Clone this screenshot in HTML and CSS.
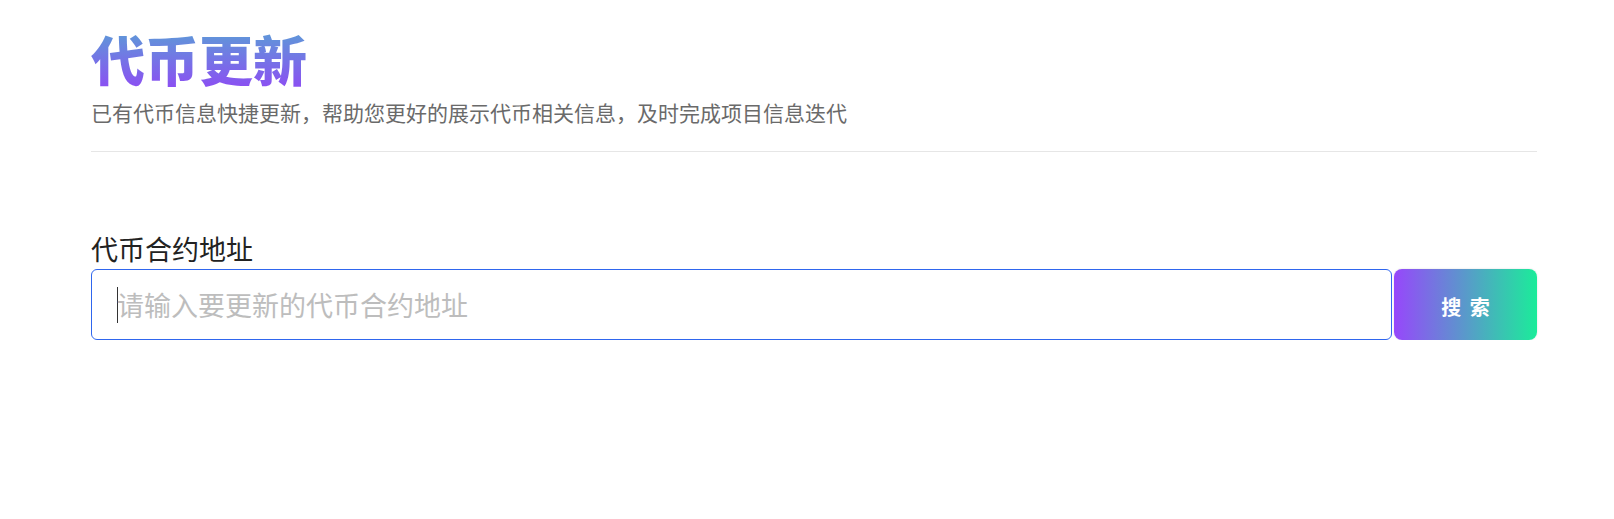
FILE: index.html
```html
<!DOCTYPE html>
<html lang="zh-CN">
<head>
<meta charset="utf-8">
<link rel="stylesheet" href="styles.css">
</head>
<body>
<div class="page">
  <header class="head">
    <h1 class="title">代币更新</h1>
    <p class="subtitle">已有代币信息快捷更新，帮助您更好的展示代币相关信息，及时完成项目信息迭代</p>
  </header>
  <section class="form">
    <label class="label">代币合约地址</label>
    <div class="row">
      <div class="input"><span class="caret"></span><span class="placeholder">请输入要更新的代币合约地址</span></div>
      <button class="btn">搜 索</button>
    </div>
  </section>
</div>
</body>
</html>
```

FILE: styles.css
```css
html, body {
  margin: 0;
  padding: 0;
  background: #fff;
  font-family: "Noto Sans CJK SC", "Noto Sans", sans-serif;
}
.page {
  padding: 27px 77px 0 91px;
}
.head {
  border-bottom: 1px solid #e6e6e6;
  padding-bottom: 25px;
}
.title {
  margin: 0;
  font-size: 54px;
  line-height: 64px;
  font-weight: 900;
  background: linear-gradient(180deg, #5a9fd6 0%, #8e4bf4 100%);
  -webkit-background-clip: text;
  background-clip: text;
  color: transparent;
  display: inline-block;
}
.subtitle {
  margin: 7px 0 0;
  font-size: 21px;
  line-height: 28px;
  color: #6a6a6a;
}
.form {
  margin-top: 79px;
}
.label {
  display: block;
  font-size: 27px;
  line-height: 36px;
  color: #222;
}
.row {
  display: flex;
  height: 71px;
  margin-top: 2px;
  gap: 2px;
}
.input {
  flex: 1;
  border: 1px solid #2f66ee;
  border-radius: 6px;
  display: flex;
  align-items: center;
  padding-left: 25px;
}
.caret {
  width: 1px;
  height: 36px;
  background: #333;
  margin-right: -1px;
}
.placeholder {
  font-size: 27px;
  color: #bdbdbd;
}
.btn {
  width: 143px;
  border: none;
  border-radius: 8px;
  background: linear-gradient(90deg, #9747fb 0%, #1bec9a 100%);
  box-shadow: 0 0 2px rgba(0, 0, 0, 0.15);
  color: #fff;
  font-family: "Noto Sans CJK SC", sans-serif;
  font-size: 20px;
  font-weight: 700;
  letter-spacing: 2px;
  text-indent: 2px;
  padding: 4px 0 0;
}
```
